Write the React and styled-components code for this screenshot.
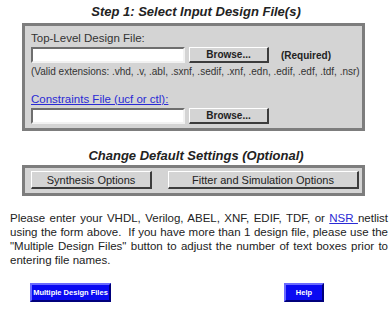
import React from 'react';
import styled, { createGlobalStyle } from 'styled-components';

/****** GLOBAL ******/
const GlobalStyle = createGlobalStyle`
  body {
    margin: 0;
    background: #ffffff;
    font-family: "Liberation Sans", Arial, sans-serif;
    color: #222222;
  }
`;

/****** STYLED COMPONENTS ******/
const Page = styled.div`
  width: 392px;
  padding-top: 4px;
`;

const SectionTitle = styled.div`
  text-align: center;
  font-size: 13px;
  font-weight: bold;
  font-style: italic;
  line-height: 16px;
  margin-top: ${props => props.$top || 0}px;
`;

const Panel = styled.div`
  box-sizing: border-box;
  width: 343px;
  margin: ${props => props.$top || 0}px 0 0 22px;
  border: 3px solid #7d7d7d;
  background: #d4d4d4;
  padding: ${props => props.$pad};
`;

const Label = styled.div`
  font-size: 11.5px;
  line-height: 15px;
  color: #333333;
`;

const LinkLabel = styled.a`
  display: inline-block;
  margin-top: 13px;
  font-size: 11.5px;
  line-height: 15px;
  color: #2a2ad4;
  text-decoration: underline;
  cursor: pointer;
`;

const FieldRow = styled.div`
  display: flex;
  align-items: center;
  gap: 4px;
  margin-top: 1px;
`;

const FileInput = styled.input`
  box-sizing: border-box;
  width: 154px;
  height: 16px;
  margin: 0;
  padding: 0 2px;
  background: #ffffff;
  border-width: 2px;
  border-style: solid;
  border-color: #6e6e6e #f2f2f2 #f2f2f2 #6e6e6e;
  outline: none;
`;

const BrowseButton = styled.button`
  box-sizing: border-box;
  width: 80px;
  height: 16px;
  margin: 0;
  padding: 0;
  background: #d4d4d4;
  border-width: 1px 2px 2px 1px;
  border-style: solid;
  border-color: #ffffff #3c3c3c #3c3c3c #ffffff;
  font-family: "Liberation Sans", Arial, sans-serif;
  font-size: 10px;
  font-weight: bold;
  color: #222222;
`;

const Required = styled.span`
  margin-left: 8px;
  font-size: 10px;
  font-weight: bold;
`;

const Hint = styled.div`
  margin-top: 2px;
  font-size: 10px;
  line-height: 14px;
  color: #333333;
  white-space: nowrap;
`;

const OptionsRow = styled.div`
  display: flex;
  gap: 16px;
`;

const OptionButton = styled.button`
  box-sizing: border-box;
  width: ${props => props.$width}px;
  height: 18px;
  margin: 0;
  padding: 0;
  background: #d4d4d4;
  border-width: 1px 2px 2px 1px;
  border-style: solid;
  border-color: #ffffff #3c3c3c #3c3c3c #ffffff;
  font-family: "Liberation Sans", Arial, sans-serif;
  font-size: 11px;
  color: #222222;
`;

const Paragraph = styled.div`
  width: 378px;
  margin: 15px 0 0 10px;
  font-size: 11.5px;
  line-height: 14px;
  color: #222222;
`;

const Line = styled.div`
  text-align: justify;
  text-align-last: ${props => props.$last ? 'left' : 'justify'};
`;

const InlineLink = styled.a`
  color: #2a2ad4;
  text-decoration: underline;
`;

const ActionRow = styled.div`
  display: flex;
  margin: 16px 0 0 30px;
  gap: 173px;
`;

const BlueButton = styled.button`
  box-sizing: border-box;
  width: ${props => props.$width}px;
  height: 19px;
  margin: 0;
  padding: 0;
  background: #0a0af2;
  border-width: 2px;
  border-style: solid;
  border-color: #6a6aff #00007c #00007c #6a6aff;
  font-family: "Liberation Sans", Arial, sans-serif;
  font-size: 7.5px;
  font-weight: bold;
  color: #ffffff;
`;

function App() {
  return (
    <Page>
      <GlobalStyle />
      <SectionTitle>Step 1: Select Input Design File(s)</SectionTitle>

      <Panel $top={3} $pad="5px 6px 4px 6px">
        <Label>Top-Level Design File:</Label>
        <FieldRow>
          <FileInput type="text" />
          <BrowseButton>Browse...</BrowseButton>
          <Required>(Required)</Required>
        </FieldRow>
        <Hint>(Valid extensions: .vhd, .v, .abl, .sxnf, .sedif, .xnf, .edn, .edif, .edf, .tdf, .nsr)</Hint>

        <LinkLabel>Constraints File (ucf or ctl):</LinkLabel>
        <FieldRow>
          <FileInput type="text" />
          <BrowseButton>Browse...</BrowseButton>
        </FieldRow>
      </Panel>

      <SectionTitle $top={17}>Change Default Settings (Optional)</SectionTitle>

      <Panel $top={1} $pad="3px 3px 4px 6px">
        <OptionsRow>
          <OptionButton $width={121}>Synthesis Options</OptionButton>
          <OptionButton $width={191}>Fitter and Simulation Options</OptionButton>
        </OptionsRow>
      </Panel>

      <Paragraph>
        <Line>Please enter your VHDL, Verilog, ABEL, XNF, EDIF, TDF, or <InlineLink>NSR </InlineLink>netlist</Line>
        <Line>using the form above.&nbsp; If you have more than 1 design file, please use the</Line>
        <Line>"Multiple Design Files" button to adjust the number of text boxes prior to</Line>
        <Line $last>entering file names.</Line>
      </Paragraph>

      <ActionRow>
        <BlueButton $width={81}>Multiple Design Files</BlueButton>
        <BlueButton $width={40}>Help</BlueButton>
      </ActionRow>
    </Page>
  );
}

export default App;
